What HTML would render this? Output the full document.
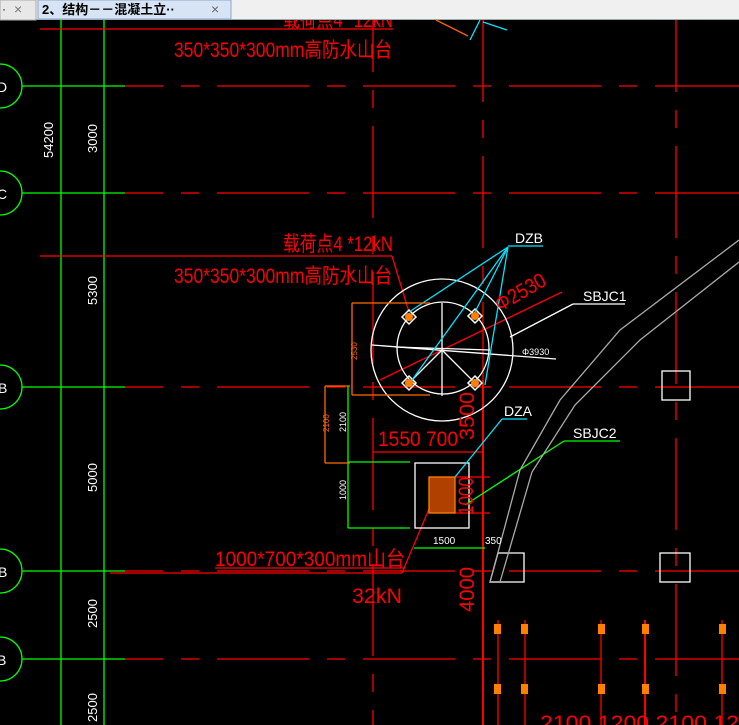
<!DOCTYPE html>
<html><head><meta charset="utf-8"><style>
html,body{margin:0;padding:0;background:#000;width:739px;height:725px;overflow:hidden}
svg{display:block}
text{font-family:"Liberation Sans","Noto Sans CJK SC",sans-serif}
</style></head><body>
<svg width="739" height="725" viewBox="0 0 739 725" xmlns="http://www.w3.org/2000/svg">
<rect width="739" height="725" fill="#000"/>
<g fill="#ff0000" font-size="21">
<text x="283" y="27" textLength="110" lengthAdjust="spacingAndGlyphs">载荷点4 *12kN</text>
</g>
<!-- tab bar -->
<rect x="0" y="0" width="739" height="20" fill="#f0f0f0"/>
<line x1="0" y1="19.5" x2="739" y2="19.5" stroke="#9aa" />
<rect x="0" y="0" width="36" height="20" fill="#e8e8e8" stroke="#aaa"/>
<text x="2" y="13" font-size="12" fill="#000">·</text>
<text x="14" y="14" font-size="14" fill="#777">×</text>
<rect x="38" y="0" width="193" height="19" fill="#d6e4f5" stroke="#8fa8c8"/>
<text x="42" y="14" font-size="13" font-weight="bold" fill="#000">2、结构－－混凝土立··</text>
<text x="211" y="14" font-size="14" fill="#666">×</text>

<g stroke-width="1.3" fill="none">
<line x1="61" y1="20" x2="61" y2="725" stroke="#00ff00"/>
<line x1="104" y1="20" x2="104" y2="725" stroke="#00ff00"/>
<g stroke="#00ff00">
<circle cx="0" cy="86" r="22"/><circle cx="0" cy="193" r="22"/><circle cx="0" cy="387" r="22"/><circle cx="0" cy="571" r="22"/><circle cx="0" cy="659" r="22"/>
<line x1="22" y1="86" x2="125" y2="86"/><line x1="22" y1="193" x2="125" y2="193"/><line x1="22" y1="387" x2="125" y2="387"/><line x1="22" y1="571" x2="125" y2="571"/><line x1="22" y1="659" x2="125" y2="659"/>
</g>
<g stroke="#ff0000" stroke-dasharray="92 18 18 18" stroke-dashoffset="54">
<line x1="125" y1="86" x2="739" y2="86"/><line x1="125" y1="193" x2="739" y2="193"/><line x1="125" y1="387" x2="739" y2="387"/><line x1="125" y1="571" x2="739" y2="571"/><line x1="125" y1="659" x2="739" y2="659"/>
</g>
<g stroke="#ff0000">
<line x1="373" y1="20" x2="373" y2="725" stroke-dasharray="92 18 18 18" stroke-dashoffset="40"/>
<line x1="483" y1="20" x2="483" y2="725" stroke-dasharray="92 18 18 18" stroke-dashoffset="10"/>
<line x1="676" y1="20" x2="676" y2="725" stroke-dasharray="92 18 18 18" stroke-dashoffset="20"/>
<line x1="483" y1="380" x2="483" y2="725" stroke-width="2"/>
<line x1="498" y1="620" x2="498" y2="725"/><line x1="525" y1="620" x2="525" y2="725"/><line x1="601" y1="620" x2="601" y2="725"/><line x1="645" y1="620" x2="645" y2="725" stroke-width="2"/><line x1="722" y1="620" x2="722" y2="725"/>
<line x1="40" y1="29" x2="393" y2="29"/>
<line x1="40" y1="256" x2="392" y2="256"/>
<line x1="392" y1="256" x2="409" y2="312"/>
<line x1="110" y1="573" x2="402" y2="573"/>
<line x1="215" y1="568" x2="405" y2="568"/>
<line x1="402" y1="573" x2="437" y2="490"/>
<line x1="380" y1="380" x2="562" y2="292"/>
<line x1="373" y1="452" x2="483" y2="452"/>
<line x1="455" y1="477" x2="490" y2="477"/><line x1="455" y1="513" x2="490" y2="513"/>
</g>
<g fill="#ff8000">
<rect x="494" y="624" width="7" height="10"/><rect x="521" y="624" width="7" height="10"/><rect x="598" y="624" width="7" height="10"/><rect x="642" y="624" width="7" height="10"/><rect x="719" y="624" width="7" height="10"/>
<rect x="494" y="684" width="7" height="10"/><rect x="521" y="684" width="7" height="10"/><rect x="598" y="684" width="7" height="10"/><rect x="642" y="684" width="7" height="10"/><rect x="719" y="684" width="7" height="10"/>
</g>
<g stroke="#fff">
<circle cx="442" cy="350" r="71"/>
<circle cx="443" cy="348" r="46"/>
<line x1="442" y1="303" x2="442" y2="396"/>
<line x1="372" y1="345" x2="556" y2="359"/>
<line x1="395" y1="347" x2="490" y2="350"/>
<line x1="442" y1="350" x2="409" y2="383"/><line x1="442" y1="350" x2="475" y2="383"/>
<line x1="573" y1="304" x2="625" y2="304"/><line x1="573" y1="304" x2="510" y2="337"/>
<rect x="415" y="463" width="54" height="65"/>
<polygon points="498,553 524,553 524,582 490,582"/>
<rect x="662" y="371" width="28" height="29"/>
<rect x="660" y="553" width="30" height="29"/>
</g>
<g stroke="#fff" stroke-width="1.5">
<polygon points="409,310 416,317 409,324 402,317"/><polygon points="475,309 482,316 475,323 468,316"/>
<polygon points="409,376 416,383 409,390 402,383"/><polygon points="475,376 482,383 475,390 468,383"/>
</g>
<g fill="#ff8000"><circle cx="409" cy="317" r="4"/><circle cx="475" cy="316" r="4"/><circle cx="409" cy="383" r="4"/><circle cx="475" cy="383" r="4"/></g>
<rect x="429" y="477" width="26" height="36" fill="#b04000" stroke="#ff8000"/>
<g stroke="#00e5ff">
<line x1="508" y1="246" x2="543" y2="246"/>
<line x1="508" y1="247" x2="409" y2="312"/><line x1="508" y1="247" x2="475" y2="312"/><line x1="508" y1="247" x2="412" y2="380"/><line x1="508" y1="247" x2="485" y2="385"/>
<line x1="502" y1="419" x2="527" y2="419"/><line x1="502" y1="419" x2="455" y2="477"/>
<line x1="480" y1="20" x2="470" y2="40"/><line x1="483" y1="22" x2="507" y2="30"/>
<line x1="436" y1="20" x2="468" y2="36" stroke="#ff6000"/>
</g>
<g stroke="#00ff00">
<line x1="564" y1="441" x2="620" y2="441"/><line x1="564" y1="441" x2="465" y2="505"/>
<line x1="414" y1="548" x2="485" y2="548"/>
<line x1="348" y1="386" x2="348" y2="528"/>
<line x1="348" y1="462" x2="410" y2="462"/><line x1="348" y1="528" x2="410" y2="528"/>
</g>
<g stroke="#ff6a00">
<line x1="352" y1="303" x2="352" y2="395"/><line x1="352" y1="303" x2="430" y2="303"/><line x1="352" y1="395" x2="430" y2="395"/>
<line x1="325" y1="386" x2="325" y2="463"/><line x1="325" y1="386" x2="350" y2="386"/><line x1="325" y1="463" x2="350" y2="463"/>
</g>
<g stroke="#aaa">
<polyline points="490,582 520,470 560,400 620,330 739,240"/>
<polyline points="500,582 532,472 575,405 640,340 739,262"/>
</g>
</g>
<g fill="#ff0000" font-size="21">
<text x="174" y="57" textLength="218" lengthAdjust="spacingAndGlyphs">350*350*300mm高防水山台</text>
<text x="283" y="251" textLength="110" lengthAdjust="spacingAndGlyphs">载荷点4 *12kN</text>
<text x="174" y="283" textLength="218" lengthAdjust="spacingAndGlyphs">350*350*300mm高防水山台</text>
<text x="378" y="446" textLength="80" lengthAdjust="spacingAndGlyphs">1550 700</text>
<text x="215" y="566" textLength="190" lengthAdjust="spacingAndGlyphs">1000*700*300mm山台</text>
<text x="352" y="603" textLength="50" lengthAdjust="spacingAndGlyphs">32kN</text>
<text x="540" y="730" textLength="199" lengthAdjust="spacingAndGlyphs">2100  1200  2100  12</text>
<text transform="translate(500,312) rotate(-30)" textLength="55" lengthAdjust="spacingAndGlyphs">Φ2530</text>
<text transform="translate(474,440) rotate(-90)" textLength="48" lengthAdjust="spacingAndGlyphs">3500</text>
<text transform="translate(473,515) rotate(-90)" textLength="38" lengthAdjust="spacingAndGlyphs">1000</text>
<text transform="translate(474,612) rotate(-90)" textLength="45" lengthAdjust="spacingAndGlyphs">4000</text>
</g>
<g fill="#fff" font-size="14">
<text x="515" y="243">DZB</text>
<text x="583" y="301">SBJC1</text>
<text x="504" y="416">DZA</text>
<text x="573" y="438">SBJC2</text>
<text x="522" y="355" font-size="9">Φ3930</text>
<text x="433" y="544" font-size="10">1500</text>
<text x="485" y="544" font-size="10">350</text>
<text x="-3" y="92" font-size="14">D</text><text x="-3" y="199" font-size="14">C</text><text x="-2" y="393" font-size="14">B</text><text x="-2" y="577" font-size="14">B</text><text x="-3" y="665" font-size="14">B</text>
<g font-size="13">
<text transform="translate(53,158) rotate(-90)">54200</text>
<text transform="translate(97,153) rotate(-90)">3000</text>
<text transform="translate(97,305) rotate(-90)">5300</text>
<text transform="translate(97,492) rotate(-90)">5000</text>
<text transform="translate(97,628) rotate(-90)">2500</text>
<text transform="translate(97,722) rotate(-90)">2500</text>
<text transform="translate(346,432) rotate(-90)" font-size="9">2100</text>
<text transform="translate(346,500) rotate(-90)" font-size="9">1000</text>
</g>
</g>
<text transform="translate(329,432) rotate(-90)" font-size="8" fill="#ff6a00">2100</text>
<text transform="translate(357,360) rotate(-90)" font-size="8" fill="#ff6a00">2530</text>
</svg>
</body></html>
